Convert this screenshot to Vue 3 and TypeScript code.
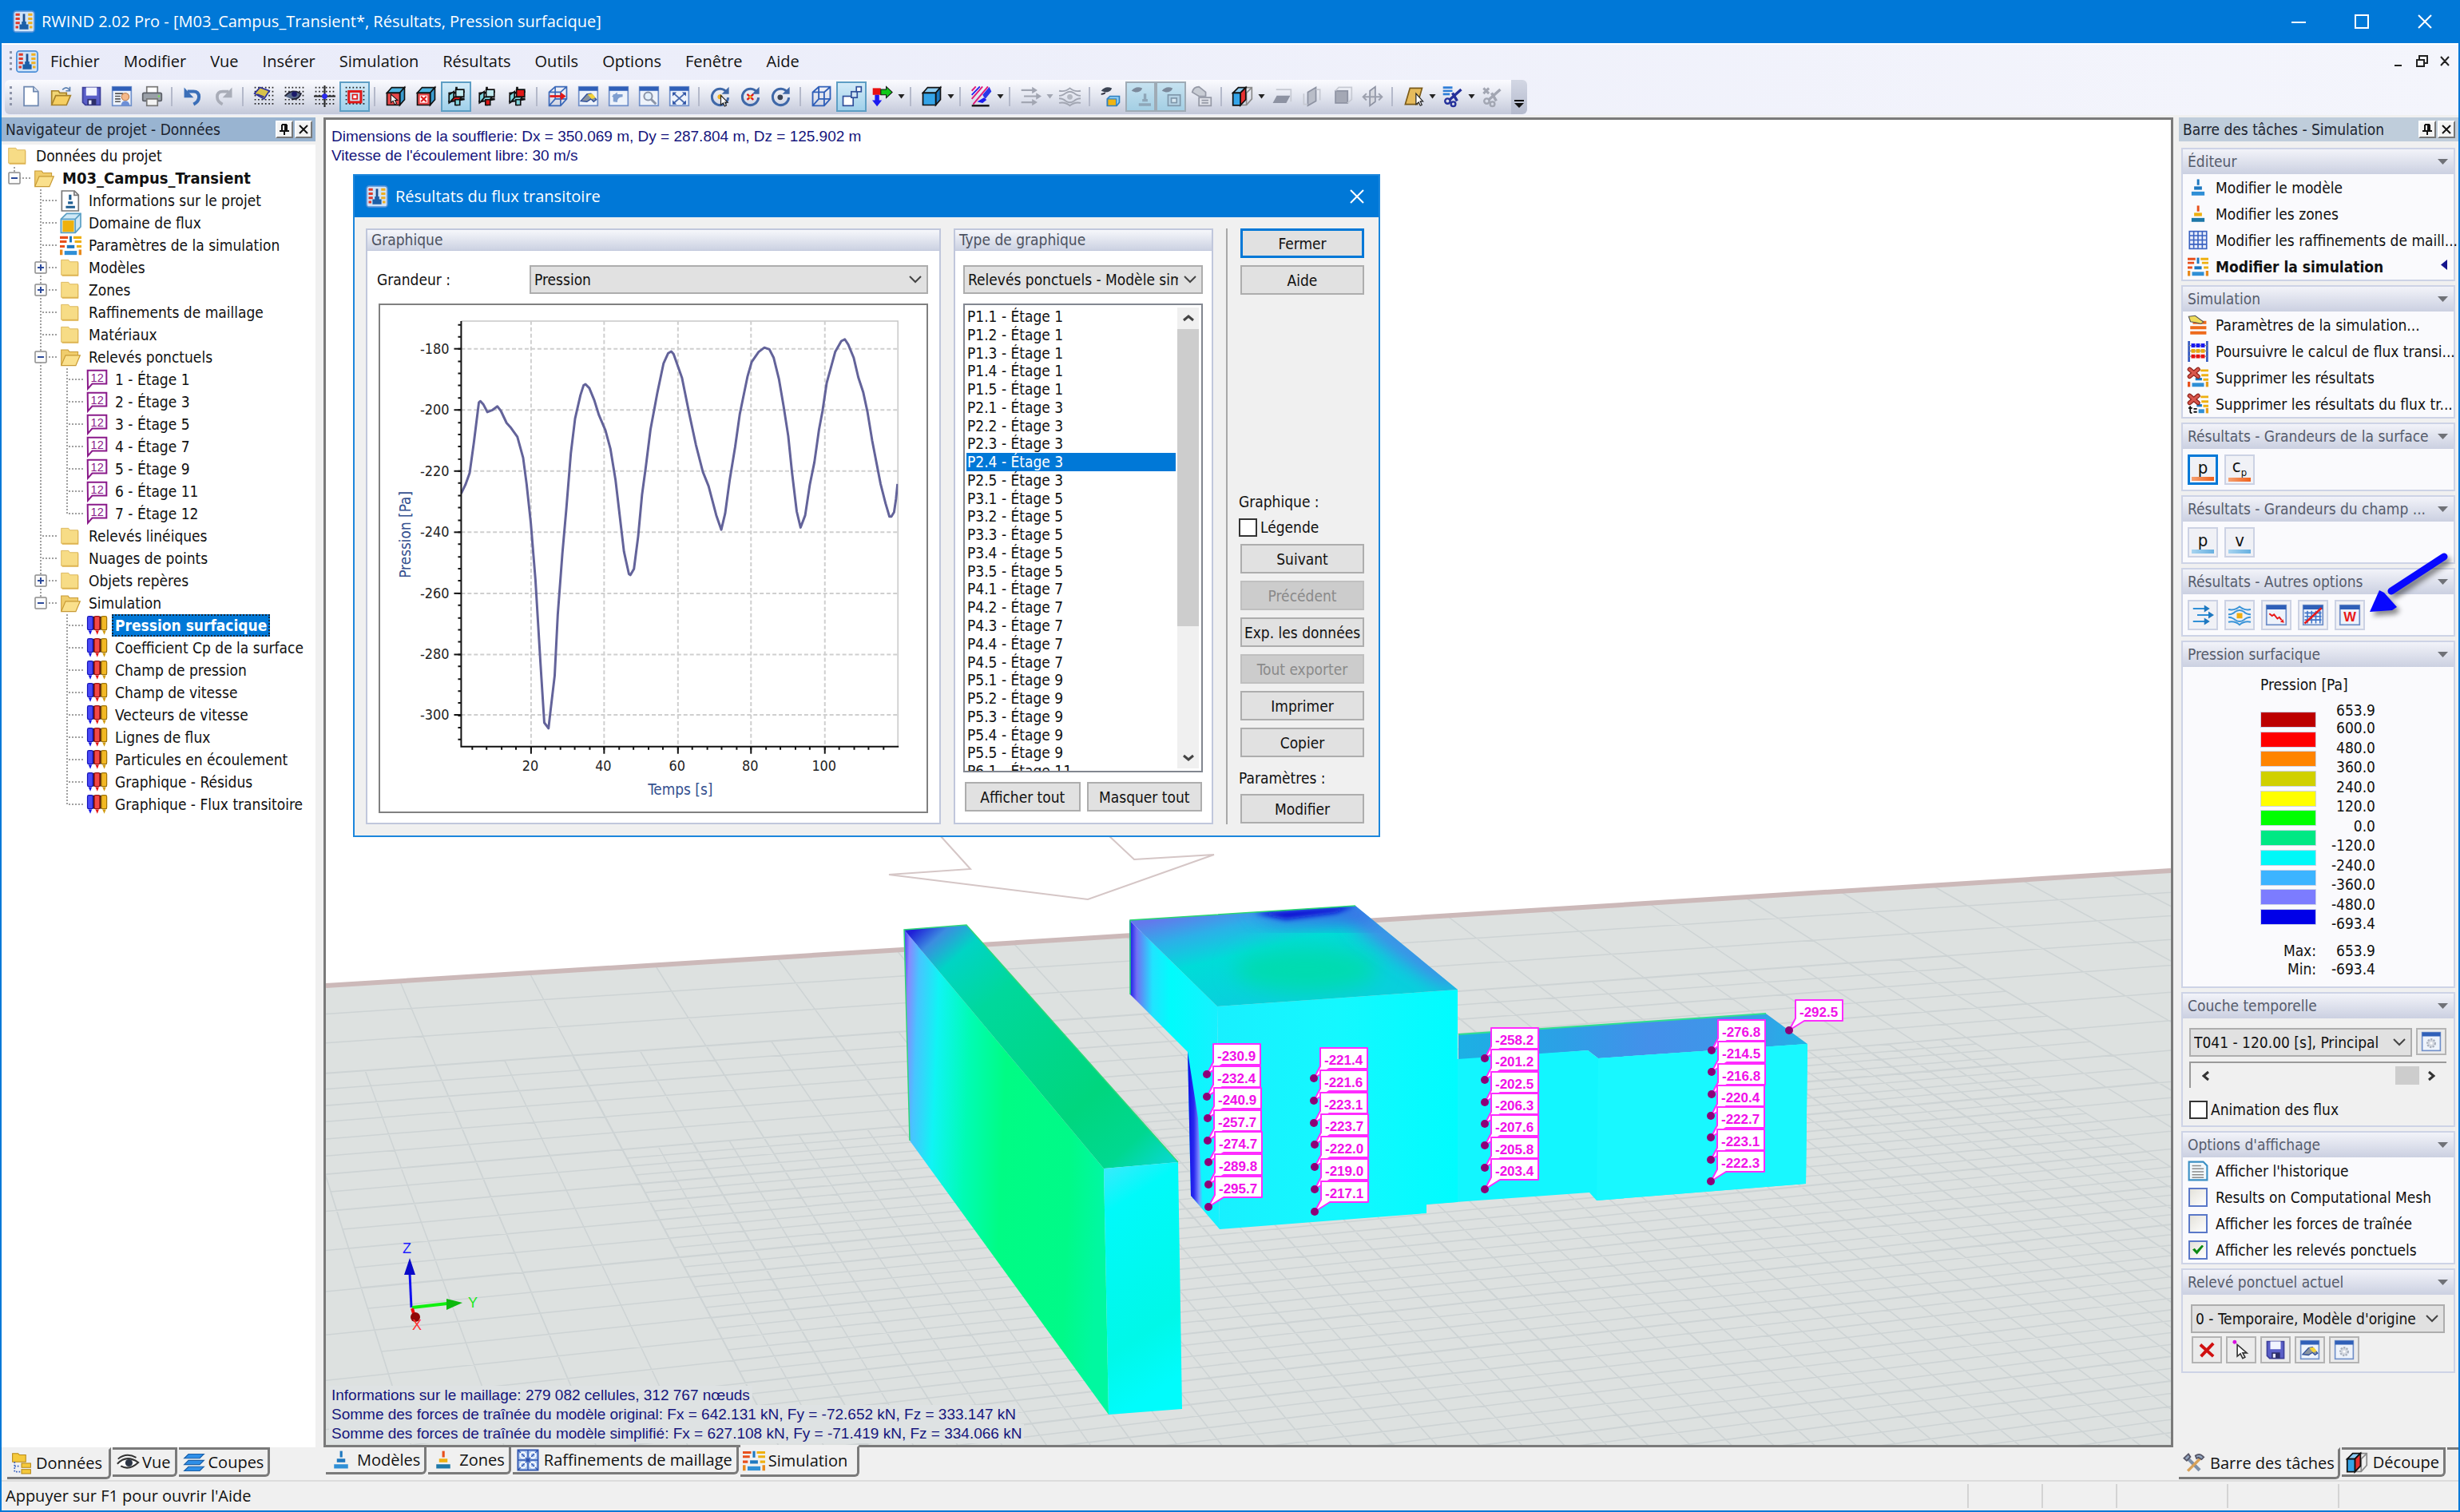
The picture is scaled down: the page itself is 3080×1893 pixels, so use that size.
<script setup lang="ts">
import { ref } from 'vue'

/* ---------- icon library: inner markup on a 16 x 16 grid ---------- */
const windowFrame =
  '<rect x="1" y="1" width="14" height="14" fill="#eef3fb" stroke="#6f8fc9"/><rect x="1" y="1" width="14" height="3" fill="#2f5fb8"/>'
const rotate =
  '<path d="M13 5.2A6 6 0 1 0 14 9" fill="none" stroke="#3f68a8" stroke-width="1.8"/><path d="M14.6 1v5.4H9.2z" fill="#3f68a8"/>'
const scissors = (c: string) =>
  `<path d="M14.5 3 5.5 11M8 5.500l3.500 6" stroke="${c}" stroke-width="2"/><circle cx="4.4" cy="11.6" r="1.9" fill="none" stroke="${c}" stroke-width="1.4"/><circle cx="8.6" cy="13.8" r="1.7" fill="none" stroke="${c}" stroke-width="1.4"/>`
const cube = (front: string, top: string, side: string, line: string) =>
  `<path d="M1.5 5.5 5 1.5h9.5L11 5.5z" fill="${top}" stroke="${line}"/><path d="M11 5.5l3.500-4v9L11 14.5z" fill="${side}" stroke="${line}"/><path d="M1.5 5.5H11v9H1.5z" fill="${front}" stroke="${line}"/>`
const dots =
  '<path d="M1 1.5h14M1 4.5h14M1 7.5h14M1 10.5h14M1 13.5h14" stroke="#222" stroke-width="1" stroke-dasharray="1 1.6"/>'
const tower = (a: string, b: string, c: string) =>
  `<rect x="7.2" y="1.5" width="1.8" height="4.5" fill="${a}"/><rect x="5" y="7" width="6" height="2.6" fill="${b}"/><rect x="3" y="11" width="10" height="3" fill="${c}"/>`
const bricks =
  '<path d="M0 2h6M0 5h5M0 8.6h3.6" stroke="#e8501c" stroke-width="1.8"/><path d="M0 11v4h2v-4zM14 11v4h2v-4z" fill="#e88a1c"/><path d="M10 2h6M11 5h5M12.4 8.6H16" stroke="#eeb010" stroke-width="1.8"/><path d="M8 1v4.6" stroke="#1e78c0" stroke-width="1.8"/><path d="M5.2 8.8h5.6" stroke="#1e78c0" stroke-width="2.4"/><path d="M3.4 13.4h9.2" stroke="#2f8fd6" stroke-width="3"/>'
const redCross =
  '<path d="M1.5 1.5 8 7M8 1.5 1.5 7" stroke="#8c2018" stroke-width="3.4" stroke-linecap="round"/><path d="M1.5 1.5 8 7M8 1.5 1.5 7" stroke="#d8564c" stroke-width="2" stroke-linecap="round"/>'
const section = (a: string, b: string, c: string) =>
  `<path d="M8 1v14M2 6l12-1.500M2 12l12-2" stroke="#111" stroke-width="1.6"/><path d="M2.5 7 6 4.500v6L2.500 13z" fill="#7fd4dc" stroke="#111"/><path d="M7.500 3h6v5.500h-6z" fill="${c}" stroke="#111"/><path d="M4 11.500 6.500 8.500H12L9.500 11.500z" fill="${a}" stroke="#111"/><path d="M7 10.500h3.500V14.500H7z" fill="${b}" stroke="#111"/>`

const icons: Record<string, string> = {
  app: '<rect x="0.5" y="0.5" width="15" height="15" rx="2" fill="#cfe3f8" stroke="#4c8fd8"/><path d="M2 3h3M2 6h3M2 9h3M2 12h2" stroke="#e03a2a" stroke-width="1.6"/><path d="M11 3h3M11 6h3M11 9h3M12 12h2" stroke="#f0b020" stroke-width="1.6"/><path d="M8 2.5V9" stroke="#1c4f8f" stroke-width="1.6"/><path d="M6.4 8h3.2v2h1.6v3.5H4.8V10h1.6z" fill="#1c5fa8"/>',
  page: '<path d="M3 1h7l3.5 3.5V15H3z" fill="#fff" stroke="#6d87b0"/><path d="M10 1v3.5h3.5" fill="#dfe8f5" stroke="#6d87b0"/>',
  open: '<path d="M1 14V4h5l1 1.5h5V8" fill="#f2d675" stroke="#a8822a"/><path d="M1 14.5 4 7.5h11l-3 7z" fill="#f6cf62" stroke="#a8822a"/><path d="M9 3.2q3-3 5 0M14.5 1v3h-3" fill="none" stroke="#5a7fb0"/>',
  save: '<path d="M1.5 1.5h13v13h-11l-2-2z" fill="#5a5fc8" stroke="#3c3f9a"/><rect x="4" y="1.5" width="8" height="6" fill="#f2f4ff"/><rect x="5" y="10" width="6.5" height="4.5" fill="#2d2f6a"/><rect x="6" y="11" width="2" height="3" fill="#e8eaff"/>',
  report: windowFrame + '<path d="M3 6h6M3 8h4M3 10h4M3 12h4" stroke="#555"/><circle cx="10.6" cy="8.4" r="2.8" fill="#f5b98a" stroke="#b87844" stroke-width=".6"/><path d="M7.4 15q.4-3.6 3.2-3.6t3.4 3.6z" fill="#6d8fd6"/>',
  print: '<rect x="4" y="1" width="8" height="5" fill="#fff" stroke="#777"/><rect x="1" y="5.5" width="14" height="6" rx="1" fill="#9aa0a8" stroke="#5c6068"/><rect x="4" y="10" width="8" height="5" fill="#f3f3f3" stroke="#777"/><circle cx="13" cy="8" r=".8" fill="#7be05a"/>',
  undo: '<path d="M4 4.5h4.5q4 0 4 4 0 3.500-4 5.500" fill="none" stroke="#3b6fb8" stroke-width="2.4"/><path d="M1.5 1.500v7.500h7z" fill="#3b6fb8"/>',
  redo: '<path d="M12 4.5H7.500q-4 0-4 4 0 3.500 4 5.500" fill="none" stroke="#a9adb8" stroke-width="2.2"/><path d="M14.5 1.500v7.500h-7z" fill="#a9adb8"/>',
  gridPlane: dots + '<path d="M1 6 5 1.5l7 2.5-4 6z" fill="#d8c24a" stroke="#2b2f9a"/><path d="M3 6.5l5 2" stroke="#2b2f9a"/>',
  gridEye: dots + '<path d="M1 8q5-6 12-2-2 5-7 4" fill="#5a6a8a" stroke="#223"/><circle cx="8" cy="6.4" r="2" fill="#1a1a6a"/>',
  gridCross: dots + '<path d="M8 0v16M0 8h16" stroke="#222" stroke-width="1.2"/><circle cx="8" cy="8" r="2" fill="#2a2af0"/>',
  gridSquare: dots + '<rect x="3.4" y="4.4" width="9" height="8" fill="#cfe6f5" stroke="#e01818" stroke-width="1.8"/><rect x="6.2" y="6.8" width="3.4" height="3.2" fill="#fff" stroke="#e01818"/>',
  cubeSelect: cube('#e8484a', '#4cb4e0', '#3a9cd0', '#111') + '<path d="M4.4 6.6v6.2l1.6-1.4 1.2 2.6 1.4-.6-1.2-2.4h2z" fill="#eee" stroke="#111" stroke-width=".6"/>',
  cubeCross: cube('#e8484a', '#4cb4e0', '#3a9cd0', '#111') + '<rect x="3.4" y="7.4" width="5.6" height="5.4" fill="#fff"/><path d="M4.2 8.2l4 3.8M8.2 8.2l-4 3.8" stroke="#e01818" stroke-width="1.2"/>',
  secA: section('#e01818', '#7fd4dc', '#bfe8ee'),
  secB: section('#7fd4dc', '#e01818', '#bfe8ee'),
  secC: section('#7fd4dc', '#7fd4dc', '#e01818'),
  wireArrow: '<path d="M1.5 5 6 1h8.5v9L10 15H1.5zM1.5 5H10v10M10 5l4.5-4M6 1v9H14.5M6 10 1.5 15" fill="none" stroke="#3a68b8"/><path d="M2 8h9" stroke="#e01818" stroke-width="1.6"/><path d="M14 8l-4-3v6z" fill="#e01818"/>',
  winEdit: windowFrame + '<path d="M2.500 11.500 7 6.500l3-.5 4 4.500-2 1.500-2-2-3 2z" fill="#8a94a0" stroke="#2f4f9a" stroke-width=".8"/><path d="M7.500 6.500l3.500-.5 2.500 3-3 1z" fill="#f2d23a"/>',
  winUndo: windowFrame + '<path d="M4 12V6.5h7v2q-4 0-4 4z" fill="#7f9fd0"/><path d="M3 8l4-3v6z" fill="#7f9fd0"/>',
  winZoom: windowFrame + '<circle cx="7.4" cy="8" r="3" fill="#e3f0fc" stroke="#8a94a8" stroke-width="1.2"/><path d="M9.6 10.2l3.6 3.6" stroke="#8a94a8" stroke-width="1.8"/>',
  winFit: windowFrame + '<path d="M4 6l8 7M12 6l-8 7" stroke="#4a6cb0" stroke-width="1.1"/><path d="M3 5h3L3 8zM13 5h-3l3 3zM3 14h3l-3-3zM13 14h-3l3-3z" fill="#2f55a8"/>',
  rotA: rotate + '<circle cx="8" cy="8.4" r="1.8" fill="#f0b020"/><path d="M8.6 7.4v7l1.8-1.4 1 2.4 1.3-.6-1-2.3h2z" fill="#fff" stroke="#222" stroke-width=".7"/>',
  rotB: rotate + '<path d="M5.6 6.4l4.6 4.2M10.2 6.4 5.6 10.6" stroke="#e01818" stroke-width="1.4"/><circle cx="7.9" cy="8.5" r="1.1" fill="#f0b020"/>',
  rotC: rotate + '<circle cx="7.6" cy="8.8" r="2" fill="#3c4454"/>',
  wire: '<path d="M1.5 5 6 1h8.5v9L10 15H1.5zM1.5 5H10v10M10 5l4.5-4M6 1v9H14.5M6 10 1.5 15" fill="none" stroke="#2f5fb8" stroke-width="1.1"/>',
  boxes: '<rect x="1.5" y="8" width="7.5" height="7" fill="#fff" stroke="#2f4f9a"/><rect x="7.6" y="4.6" width="4.4" height="4.4" fill="#cfe4f4" stroke="#2f4f9a"/><rect x="11.4" y="1" width="3.6" height="3.6" fill="#fff" stroke="#2f4f9a"/>',
  axes: '<path d="M1 2h6v5H1z" fill="#e81010"/><path d="M7 3h4V.8L15.5 5 11 9.2V7H7z" fill="#10c818" stroke="#111" stroke-width=".6"/><path d="M2.6 7h3.2v4h2L4.2 15.500.6 11h2z" fill="#1a1af0"/>',
  solid: cube('#35a4e8', '#8ccdf4', '#1c78c0', '#111'),
  hatch: '<path d="M1 4 4 .8M1 10 9 .8M2 14 13 .8" stroke="#e01878" stroke-width="1.1"/><path d="M1 7 7 .8" stroke="#1a1af0"/><path d="M9 7l5-6 1.6 3.4L11 10z" fill="#2a36e8"/><path d="M5 12l5-3 2 1.6-3 2.4z" fill="#1a1af0"/><path d="M1 15h13" stroke="#111" stroke-width="1.4"/>',
  arrowsGray: '<path d="M1 3.5h9M3 8h10M1 12.5h9" stroke="#a2a6b2" stroke-width="1.3"/><path d="M9 1l4 2.5L9 6zM12 5.5 16 8l-4 2.5zM9 10l4 2.5L9 15z" fill="#a2a6b2"/>',
  wavesGray: '<path d="M0 4q4.500 1 8-2 3.500 3 8 2M0 7.600q3 0 5-2 3-2 6 0 2 2 5 2M0 9.600q3 0 5 2 3 2 6 0 2-2 5-2M0 13q4.500-1 8 2 3.500-3 8-2" fill="none" stroke="#a2a6b2" stroke-width="1.1"/><circle cx="8" cy="8.500" r="2" fill="#b4b8c2"/>',
  eyeBox: '<path d="M1 4q3-4 8-2-1 3-5 3z" fill="#3c4454"/><path d="M1 6.4q2 0 3-1" stroke="#223" fill="none"/><path d="M5.5 10 7.5 8h7v4.6l-2 2.4h-7z" fill="#8ccdf4" stroke="#2f7fc0"/><rect x="5.8" y="10" width="6.4" height="5" fill="#f0b412" stroke="#2f7fc0" stroke-width=".7"/>',
  eyeTower: '<path d="M1 4q3-4 8-2-1 3-5 3z" fill="#7c8a9c"/><path d="M11 6v4M9 11h4M6.4 14.2h9" stroke="#8fa6b8" stroke-width="2"/>',
  eyeFrame: '<path d="M1 4q3-4 8-2-1 3-5 3z" fill="#7c8a9c"/><rect x="5.6" y="7" width="9" height="8" fill="#b6d2e4" stroke="#7f97aa"/><rect x="8" y="9.4" width="4" height="3.4" fill="#d6e6f0" stroke="#7f97aa"/>',
  handBox: '<path d="M1 5q1-4 5-4l5 4v3H6z" fill="#c8ccd4" stroke="#9599a6"/><path d="M6 9h9v6H6z" fill="#dfe1e8" stroke="#9599a6"/><path d="M8 11h5M8 13h5" stroke="#9599a6"/>',
  cutCube: '<path d="M10 1.500h5v8.500l-4 4.500H7" fill="none" stroke="#8a8a8a"/><path d="M11 5.500 15 1.500M11 5.500v9M8 5.500h3" fill="none" stroke="#8a8a8a"/><path d="M1 5.500 5 1.500h5.500L6.500 5.500z" fill="#8ccdf4" stroke="#111"/><path d="M6.500 5.500l4-4v9l-4 4.200z" fill="#e83030" stroke="#111"/><path d="M1 5.500h5.500v9.200H1z" fill="#35a4e8" stroke="#111"/>',
  planeA: '<path d="M1.5 13 4.5 7.5h10l-3 5.5z" fill="#8d92a2"/><path d="M4 3h11v9" fill="none" stroke="#c6c9d2"/>',
  planeB: '<path d="M5 5 11 1.5v10L5 15z" fill="#b9bdc8" stroke="#8d92a2"/><path d="M2 6v8h3M11 3h3v8" fill="none" stroke="#c6c9d2"/>',
  planeC: '<rect x="3" y="4" width="9" height="9" fill="#a4a8b5" stroke="#8d92a2"/><path d="M3 4l2.4-2.6H15v9L12 13" fill="none" stroke="#c6c9d2"/>',
  planeD: '<path d="M6 4l4-3v11l-4 3z" fill="#d6d8df" stroke="#8d92a2"/><path d="M1 8.5h14M3.5 6 1 8.5 3.5 11M12.5 6 15 8.5 12.5 11" fill="none" stroke="#9ca0ad" stroke-width="1.2"/>',
  book: '<path d="M2 14 5.5 2h9L11 14z" fill="#e6bb5c" stroke="#7a5a18"/><path d="M10 6v8l2-1.6 1.2 2.6 1.2-.6-1.2-2.6h2z" fill="#fff" stroke="#222" stroke-width=".7"/>',
  cut: '<path d="M1 1.5h7M1 4h7M1 6.500h5" stroke="#2f7fd8" stroke-width="1.6"/>' + scissors('#24309a'),
  cutGray: '<path d="M2 2l4 4M6 2 2 6" stroke="#a2a6b2" stroke-width="1.8"/>' + scissors('#a2a6b2'),

  folder: '<path d="M1.6 2.6h5l1 1.4h6.2v10H1.6z" fill="#e0b248"/><path d="M1 2h5.4l1 1.4H13.4V13.2H1z" fill="#f7dc86" stroke="#d8b050" stroke-width=".5"/>',
  folderOpen: '<path d="M1 13.6V2.4h5l1 1.4h6.4V7" fill="#f0cd6c" stroke="#c89a34" stroke-width=".6"/><path d="M1 14 4.2 6.4H15L11.8 14z" fill="#fae08c" stroke="#c89a34" stroke-width=".7"/>',
  info: '<path d="M1.4.6h9.4l3 3v11.8H1.4z" fill="#fff" stroke="#777"/><path d="M10.6.8v3h3" fill="none" stroke="#777"/><path d="M7.6 3.4v3.8M6 9.4h3.6M4.4 12.6h6.8" stroke="#1f5f92" stroke-width="1.9"/>',
  domain: '<path d="M.8 5 5 .8h10.4v9.8L11.4 15H.8z" fill="#cfe8f6" stroke="#5a9fc4"/><path d="M11.4 5v10M.8 5h10.6l4-4.2" fill="none" stroke="#5a9fc4"/><rect x="2" y="6" width="8.4" height="8.4" fill="#efb10c"/>',
  params: bricks,
  probe: '<path d="M1 1h14v10H4.4L1.2 14.6z" fill="#fff" stroke="#8a1a8a" stroke-width="1.2"/><text x="8.1" y="9.2" font-size="8.6" text-anchor="middle" fill="#8a1a8a" font-family="Liberation Sans, sans-serif">12</text>',
  pens: '<path d="M4.6 1h1.8v10H4.6zM9.6 1h1.6v10H9.6zM13.8 2h1.6v9h-1.6z" fill="#2a1a10"/><rect x=".9" y="1" width="4" height="10" rx="1" fill="#4a4af8" stroke="#1414b8" stroke-width=".7"/><rect x="6" y="1" width="4" height="10" rx="1" fill="#f24848" stroke="#a01010" stroke-width=".7"/><rect x="11.2" y="1" width="4" height="10" rx="1" fill="#f2b824" stroke="#a07408" stroke-width=".7"/><path d="M1.6 11.6h2.6L3 14.6z" fill="#1414e8"/><path d="M6.8 11.6h2.6l-1.2 3z" fill="#e81414"/><path d="M12 11.6h2.6l-1.2 3z" fill="#d09a10"/>',
  towerBlue: tower('#1e78c0', '#1e78c0', '#2f8fd6'),
  towerMix: tower('#e8501c', '#eeb010', '#1e78a8'),
  mesh: '<rect x="1.4" y="1" width="13.2" height="13.4" fill="#e8eefc" stroke="#3a62c0"/><path d="M4.7 1v13M8 1v13M11.3 1v13M1.4 4.3h13M1.4 7.7h13M1.4 11h13" stroke="#3a62c0"/>',
  meshCells: '<rect x=".8" y=".8" width="14.4" height="14.4" fill="#a8c4ee" stroke="#2f55b0"/><path d="M8 1v14M1 8h14M1 1l14 14M15 1 1 15" stroke="#2f55b0" stroke-width=".8"/><circle cx="4.5" cy="4.5" r="2" fill="none" stroke="#fff"/><circle cx="11.5" cy="11.5" r="2" fill="none" stroke="#fff"/><circle cx="11.5" cy="4.5" r="2" fill="none" stroke="#fff"/><circle cx="4.5" cy="11.5" r="2" fill="none" stroke="#fff"/>',
  handLayers: '<path d="M4 6h10.4M2 10h12.4M2 14h12.4" stroke="#ee6a1c" stroke-width="2.4"/><path d="M.8 1.4l5-.6 6.4 4.8-2 1.4-4-1-4-.6z" fill="#f0dc5a" stroke="#555" stroke-width=".7"/>',
  abacus: '<path d="M1 0v16M15 0v16" stroke="#2f55c0" stroke-width="1.6"/><path d="M1 3.4h14M1 7.6h14M1 11.8h14" stroke="#888" stroke-width=".8"/><path d="M2.8 3.4h10.4" stroke="#1a1af0" stroke-width="3" stroke-dasharray="3 .7"/><path d="M2.8 7.6h10.4" stroke="#e8a810" stroke-width="3" stroke-dasharray="3 .7"/><path d="M2.8 11.8h10.4" stroke="#e81010" stroke-width="3" stroke-dasharray="3 .7"/>',
  dropResults: '<path d="M10 2.4h6M10.6 6h5.4M12 9.4h4" stroke="#eeb010" stroke-width="1.8"/><path d="M6 9h5" stroke="#1e78c0" stroke-width="2"/><path d="M3.4 13.4h9.2" stroke="#2f8fd6" stroke-width="3"/><path d="M0 11v4h2v-4z" fill="#e8501c"/><path d="M14 11v4h2v-4z" fill="#e8a01c"/>' + redCross,
  dropTransient: '<path d="M10 2.4h6M10.6 6h5.4M12 9.4h4" stroke="#eeb010" stroke-width="1.8"/><path d="M7 9h4" stroke="#1e78c0" stroke-width="2"/><path d="M8.4 13.4h4.4" stroke="#2f8fd6" stroke-width="3"/><path d="M14 11v4h2v-4z" fill="#e8a01c"/><path d="M2 9.4v4.4q0 1 1.4 1M.6 11h3M4.6 11.6h2.6M4.6 14h2.6" fill="none" stroke="#111" stroke-width="1.1"/>' + redCross,
  flowArrows: '<path d="M1 3.4h9M4 8h9M1 12.6h9" stroke="#2f8fd6" stroke-width="1.2"/><path d="M9 .8l4 2.6L9 6zM12 5.4 16 8l-4 2.6zM9 10l4 2.6L9 15.2z" fill="#1e78c0"/>',
  streamlines: '<path d="M0 4q4.5 1 8-2 3.5 3 8 2M0 7.6q3 0 5-2 3-2 6 0 2 2 5 2M0 9.6q3 0 5 2 3 2 6 0 2-2 5-2M0 13q4.5-1 8 2 3.5-3 8-2" fill="none" stroke="#3a94d8" stroke-width="1.1"/><rect x="6" y="6.6" width="4" height="3.8" fill="#f0ae10"/>',
  curve: windowFrame + '<path d="M3 7l2 1.6 1.4-1 2.4 3 1.4-1 1.6 2" fill="none" stroke="#e81818" stroke-width="1.1"/><path d="M13.6 13.6 10.8 13l2-2z" fill="#e81818"/>',
  meshCurve: windowFrame + '<path d="M4 5v9M7 5v9M10 5v9M13 5v9M2 6.5h12M2 9h12M2 11.5h12" stroke="#3f74c8" stroke-width=".9"/><path d="M2 14 14 3" stroke="#e81818" stroke-width="1.4"/>',
  wChart: windowFrame + '<text x="8" y="12.8" font-size="9.5" text-anchor="middle" fill="#e81818" font-weight="bold" font-family="Liberation Sans, sans-serif">W</text>',
  gear: windowFrame + '<circle cx="8" cy="9.3" r="3" fill="#d6dae2" stroke="#a9b0bd" stroke-width="1.4" stroke-dasharray="1.4 .8"/><circle cx="8" cy="9.3" r="1" fill="#fff"/>',
  history: '<path d="M1 1h11l3 3v11H1z" fill="#f2f8fc" stroke="#3a8fc4" stroke-width="1.3"/><path d="M3.4 4h7M3.4 6.3h9M3.4 8.6h9M3.4 10.9h9M3.4 13.1h9" stroke="#8a8a8a" stroke-width=".9"/>',
  remove: '<path d="M3 4l10 9M13 3 3.5 13" stroke="#d01010" stroke-width="2.4"/>',
  pick: '<circle cx="3" cy="2" r="1.5" fill="#d810e0"/><path d="M5 4v9l2.4-2 1.8 3.6 1.8-.9-1.8-3.3h3.2z" fill="#fff" stroke="#333"/>',
  tools: '<path d="M2.5 3.5l9.5 9.5" stroke="#7d8fa8" stroke-width="2.4"/><path d="M13 4 3.5 13.5" stroke="#d8a25a" stroke-width="2"/><path d="M.8 4.4 4 1.4l1.4 2-2.6 2.8z" fill="#93a6bf" stroke="#556"/><path d="M9 2.6q3-2.4 6 1l-1.6 1.6-2.2-1.4-1.4.8z" fill="#93a6bf" stroke="#556"/>',
  dataTree: '<path d="M1.5 1h4l1 1H11v5H1.5z" fill="#f5c93c" stroke="#b88a18" stroke-width=".6"/><path d="M3 7v7h4M3 10h4" fill="none" stroke="#3a62c0" stroke-dasharray="1 1"/><rect x="8" y="8" width="6.5" height="3" fill="#f5c93c" stroke="#b88a18" stroke-width=".6"/><rect x="8" y="12.4" width="6.5" height="3" fill="#f5c93c" stroke="#b88a18" stroke-width=".6"/>',
  eye: '<path d="M.5 9Q7 2 15.5 8 9 14 3 10.5" fill="#fff" stroke="#333" stroke-width="1.2"/><circle cx="8.8" cy="8.3" r="2.6" fill="#2b3444"/><path d="M1 5.5Q7 .5 14 4.5" fill="none" stroke="#333"/>',
  layers: '<path d="M4 2h11l-3 3H1zM4 6.5h11l-3 3H1zM4 11h11l-3 3H1z" fill="#2f8fe8" stroke="#1a5fa8" stroke-width=".7"/>'
}

/* ---------- menus and toolbar ---------- */
const menus = ['Fichier', 'Modifier', 'Vue', 'Insérer', 'Simulation', 'Résultats', 'Outils', 'Options', 'Fenêtre', 'Aide']

interface Tool { icon: string; on?: boolean; off?: boolean; drop?: boolean }
const toolGroups: Tool[][] = [
  [{ icon: 'page' }, { icon: 'open' }, { icon: 'save' }, { icon: 'report' }, { icon: 'print' }],
  [{ icon: 'undo' }, { icon: 'redo' }],
  [{ icon: 'gridPlane' }, { icon: 'gridEye' }, { icon: 'gridCross' }, { icon: 'gridSquare', on: true }],
  [{ icon: 'cubeSelect' }, { icon: 'cubeCross' }, { icon: 'secA', on: true }, { icon: 'secB' }, { icon: 'secC' }],
  [{ icon: 'wireArrow' }, { icon: 'winEdit' }, { icon: 'winUndo' }, { icon: 'winZoom' }, { icon: 'winFit' }],
  [{ icon: 'rotA' }, { icon: 'rotB' }, { icon: 'rotC' }],
  [{ icon: 'wire' }, { icon: 'boxes', on: true }, { icon: 'axes', drop: true }],
  [{ icon: 'solid', drop: true }],
  [{ icon: 'hatch', drop: true }],
  [{ icon: 'arrowsGray', drop: true, off: true }, { icon: 'wavesGray', off: true }],
  [{ icon: 'eyeBox' }, { icon: 'eyeTower', on: true, off: true }, { icon: 'eyeFrame', on: true, off: true }, { icon: 'handBox', off: true }],
  [{ icon: 'cutCube', drop: true }, { icon: 'planeA', off: true }, { icon: 'planeB', off: true }, { icon: 'planeC', off: true }, { icon: 'planeD', off: true }],
  [{ icon: 'book', drop: true }, { icon: 'cut', drop: true }, { icon: 'cutGray', off: true }]
]

/* ---------- project tree ---------- */
type Guide = 'none' | 'line' | 'tee' | 'end' | 'plus' | 'minus' | 'minusEnd' | 'minusTop'
interface Node { guides: Guide[]; icon: string; text: string; bold?: boolean; selected?: boolean; root?: boolean }
const two = (g: Guide, icon: string, text: string): Node => ({ guides: ['none', g], icon, text })
const floors = ['1 - Étage 1', '2 - Étage 3', '3 - Étage 5', '4 - Étage 7', '5 - Étage 9', '6 - Étage 11', '7 - Étage 12']
const results = ['Pression surfacique', 'Coefficient Cp de la surface', 'Champ de pression', 'Champ de vitesse', 'Vecteurs de vitesse', 'Lignes de flux', 'Particules en écoulement', 'Graphique - Résidus', 'Graphique - Flux transitoire']
const tree: Node[] = [
  { guides: [], icon: 'folder', text: 'Données du projet' },
  { guides: ['minusTop'], icon: 'folderOpen', text: 'M03_Campus_Transient', bold: true, root: true },
  two('tee', 'info', 'Informations sur le projet'),
  two('tee', 'domain', 'Domaine de flux'),
  two('tee', 'params', 'Paramètres de la simulation'),
  two('plus', 'folder', 'Modèles'),
  two('plus', 'folder', 'Zones'),
  two('tee', 'folder', 'Raffinements de maillage'),
  two('tee', 'folder', 'Matériaux'),
  two('minus', 'folderOpen', 'Relevés ponctuels'),
  ...floors.map((text, i): Node => ({ guides: ['none', 'line', i === floors.length - 1 ? 'end' : 'tee'], icon: 'probe', text })),
  two('tee', 'folder', 'Relevés linéiques'),
  two('tee', 'folder', 'Nuages de points'),
  two('plus', 'folder', 'Objets repères'),
  two('minusEnd', 'folderOpen', 'Simulation'),
  ...results.map((text, i): Node => ({ guides: ['none', 'none', i === results.length - 1 ? 'end' : 'tee'], icon: 'pens', text, bold: i === 0, selected: i === 0 }))
]
const boxed = (g: Guide) => g.startsWith('plus') || g.startsWith('minus')

/* ---------- floor grid, projected ---------- */
const origin = [1811, 1146], farRight = [12000, 504], farLeft = [-176, -372]
const project = (u: number, v: number) => {
  const a = 0.01266 * u, b = -0.01826 * v, w = 1 + a + b
  return [0, 1].map(i => Math.round((origin[i] + a * farRight[i] + b * farLeft[i]) / w)).join(' ')
}
const gridPath = (u0: number, u1: number, v0: number, v1: number, step: number) => {
  let d = ''
  for (let u = u0; u <= u1; u += step) d += `M${project(u, v0)}L${project(u, v1)}`
  for (let v = v0; v <= v1; v += step) d += `M${project(u0, v)}L${project(u1, v)}`
  return d
}
const floorGrid = gridPath(-14, 9, 0, 20, 1) + gridPath(-10, 4, 3, 20, 0.5) + gridPath(-8, 3, 6, 20, 0.25)

/* ---------- probe labels ---------- */
interface Probe { x: number; y: number; value: string }
const column = (x: number, y: number, lean: number, step: number, values: string[]): Probe[] =>
  values.map((value, i) => ({ x: Math.round(x + lean * i), y: Math.round(y + step * i), value }))
const probes: Probe[] = [
  ...column(1511, 1345, 0.4, 27.6, ['-230.9', '-232.4', '-240.9', '-257.7', '-274.7', '-289.8', '-295.7']),
  ...column(1645, 1350, 0.2, 27.8, ['-221.4', '-221.6', '-223.1', '-223.7', '-222.0', '-219.0', '-217.1']),
  ...column(1859, 1325, 0, 27.3, ['-258.2', '-201.2', '-202.5', '-206.3', '-207.6', '-205.8', '-203.4']),
  ...column(2143, 1315, -0.2, 27.3, ['-276.8', '-214.5', '-216.8', '-220.4', '-222.7', '-223.1', '-222.3']),
  { x: 2240, y: 1290, value: '-292.5' }
]

/* ---------- chart ---------- */
const yTicks = [-180, -200, -220, -240, -260, -280, -300].map((value, i) => ({ value, y: Math.round(435 + i * 76.9) }))
const xTicks = [20, 40, 60, 80, 100].map((value, i) => ({ value, x: Math.round(663.6 + i * 92.5) }))
let minor = ''
for (let y = 435.3 - 30.8; y < 936; y += 15.38) minor += `M572 ${Math.round(y)}h4`
for (let x = 589.6; x < 1126; x += 18.5) minor += `M${Math.round(x)} 936v4`
const curve = '302,762 313,742 324,715 335,645 348,553 352,550 360,558 370,575 382,571 396,562 405,572 420,600 432,612 448,632 463,680 472,740 483,830 495,960 508,1150 518,1288 529,1301 534,1262 545,1180 553,1040 565,900 575,800 587,670 598,590 612,536 620,514 625,511 635,520 648,548 660,582 677,617 690,660 703,730 715,820 725,895 738,947 742,949 751,935 762,860 772,765 782,700 794,615 812,530 828,463 840,440 848,436 854,442 876,497 895,580 912,650 930,712 945,745 965,812 978,845 988,808 1000,730 1014,655 1026,580 1046,494 1057,460 1075,437 1090,427 1103,431 1114,450 1128,500 1140,562 1152,630 1162,715 1174,803 1184,840 1196,812 1208,742 1220,690 1232,615 1241,573 1252,508 1274,437 1290,412 1299,408 1308,420 1322,450 1334,495 1347,530 1358,575 1370,640 1381,690 1392,740 1405,785 1415,815 1420,815 1427,805 1432,775 1436,740'

const series: string[] = []
;[1, 3, 5, 7, 9].forEach((floor, i) => {
  for (let k = 1; k <= 5; k++) series.push(`P${i + 1}.${k} - Étage ${floor}`)
})
series.push('P6.1 - Étage 11')
const selectedSeries = ref('P2.4 - Étage 3')

/* ---------- task panel ---------- */
const editor = [
  { icon: 'towerBlue', text: 'Modifier le modèle' },
  { icon: 'towerMix', text: 'Modifier les zones' },
  { icon: 'mesh', text: 'Modifier les raffinements de maill...' },
  { icon: 'params', text: 'Modifier la simulation', current: true }
]
const simulation = [
  { icon: 'handLayers', text: 'Paramètres de la simulation...' },
  { icon: 'abacus', text: 'Poursuivre le calcul de flux transi...' },
  { icon: 'dropResults', text: 'Supprimer les résultats' },
  { icon: 'dropTransient', text: 'Supprimer les résultats du flux tr...' }
]
const others = ['flowArrows', 'streamlines', 'curve', 'meshCurve', 'wChart']
const scaleColors = ['#bc0000', '#ff0000', '#ff8400', '#d0d000', '#ffff00', '#00ff00', '#00e884', '#00f8f8', '#3cb4ff', '#7c7cff', '#0000e8']
const scaleValues = ['600.0', '480.0', '360.0', '240.0', '120.0', '0.0', '-120.0', '-240.0', '-360.0', '-480.0', '-693.4']
const display = ref([
  { text: 'Results on Computational Mesh', on: false },
  { text: 'Afficher les forces de traînée', on: false },
  { text: 'Afficher les relevés ponctuels', on: true }
])
const legend = ref(false)
const animation = ref(false)
const probeTools = ['remove', 'pick', 'save', 'winEdit', 'gear']
</script>

<template>
  <div class="window">
    <header class="titlebar">
      <svg class="ic" viewBox="0 0 16 16" v-html="icons.app" />
      <h1>RWIND 2.02 Pro - [M03_Campus_Transient*, Résultats, Pression surfacique]</h1>
      <button class="win-btn" aria-label="Réduire"><svg viewBox="0 0 20 20"><path d="M1 11h18" /></svg></button>
      <button class="win-btn" aria-label="Agrandir"><svg viewBox="0 0 20 20"><path d="M2 2h16v16H2z" /></svg></button>
      <button class="win-btn" aria-label="Fermer"><svg viewBox="0 0 20 20"><path d="M2 2l16 16M18 2 2 18" /></svg></button>
    </header>

    <nav class="menubar">
      <span class="grip" />
      <svg class="ic" viewBox="0 0 16 16" v-html="icons.app" />
      <button v-for="m in menus" :key="m">{{ m }}</button>
      <span class="fill" />
      <svg class="mdi" viewBox="0 0 76 20"><path d="M2 15h9M30 8h9v8h-9zM33 8V3h10v9h-4M60 4l10 11M70 4 60 15" /></svg>
    </nav>

    <div class="toolbar-row">
      <div class="toolbar">
        <span class="grip" />
        <template v-for="(group, gi) in toolGroups" :key="gi">
          <span v-if="gi" class="sep" />
          <template v-for="t in group" :key="t.icon">
            <button class="tool" :class="{ on: t.on, off: t.off }" :aria-label="t.icon">
              <svg class="ic" viewBox="0 0 16 16" v-html="icons[t.icon]" />
            </button>
            <span v-if="t.drop" class="drop" :class="{ off: t.off }" />
          </template>
        </template>
      </div>
      <span class="overflow" />
    </div>

    <main class="workspace">
      <aside class="dock left">
        <div class="dock-head">
          <h2>Navigateur de projet - Données</h2>
          <button class="cap" aria-label="Épingler"><svg viewBox="0 0 16 16"><path d="M5 2v8M11 2v8M9 2v8M5 2h6M2 10h12M8 10v5" /></svg></button>
          <button class="cap" aria-label="Fermer le volet"><svg viewBox="0 0 16 16"><path d="M3 3l10 10M13 3 3 13" /></svg></button>
        </div>
        <ul class="tree">
          <li v-for="n in tree" :key="n.text">
            <svg v-for="(g, i) in n.guides" :key="i" class="guide" viewBox="0 0 33 28">
              <g v-if="g !== 'none'">
                <path class="dot" :d="g === 'end' || g === 'minusEnd' || g === 'minusTop' ? 'M16 0V14' : 'M16 0V28'" />
                <path v-if="g !== 'line'" class="dot" d="M18 14H38" />
                <g v-if="boxed(g)">
                  <rect x="9" y="7" width="14" height="14" rx="1" fill="#fbfbfb" stroke="#8c8c8c" stroke-width="1.5" />
                  <path :d="g === 'plus' ? 'M12 14h8M16 10v8' : 'M12 14h8'" stroke="#2c4a9a" stroke-width="2" />
                </g>
              </g>
            </svg>
            <svg class="ic" viewBox="0 0 16 16" v-html="icons[n.icon]" />
            <span class="label" :class="{ bold: n.bold, selected: n.selected, root: n.root }">{{ n.text }}</span>
          </li>
        </ul>
        <div class="tabs">
          <button class="tab active"><svg class="ic" viewBox="0 0 16 16" v-html="icons.dataTree" />Données</button>
          <button class="tab tight"><svg class="ic" viewBox="0 0 16 16" v-html="icons.eye" />Vue</button>
          <button class="tab tight"><svg class="ic" viewBox="0 0 16 16" v-html="icons.layers" />Coupes</button>
          <span class="tab-fill" />
        </div>
      </aside>

      <section class="center">
        <div class="view">
          <svg class="scene" viewBox="408 150 2310 1661" preserveAspectRatio="xMinYMin slice">
            <defs>
              <linearGradient id="wallSide" x1="0" x2="1" y1="0" y2="0.1">
                <stop offset="0" stop-color="#3c3cf0" /><stop offset=".03" stop-color="#8888ff" /><stop offset=".08" stop-color="#48c4ff" />
                <stop offset=".18" stop-color="#10f4f4" /><stop offset=".34" stop-color="#00fcb4" /><stop offset=".52" stop-color="#00fc84" /><stop offset=".85" stop-color="#00fa88" /><stop offset="1" stop-color="#00f8a0" />
              </linearGradient>
              <linearGradient id="wallTop" x1="1150" y1="1160" x2="1440" y2="1480" gradientUnits="userSpaceOnUse">
                <stop offset="0" stop-color="#2020d8" /><stop offset=".06" stop-color="#3c8ce0" /><stop offset=".14" stop-color="#00d4c4" /><stop offset=".3" stop-color="#00d89c" />
                <stop offset=".7" stop-color="#00d67e" /><stop offset=".88" stop-color="#00d890" /><stop offset="1" stop-color="#08d8d0" />
              </linearGradient>
              <linearGradient id="wallFront" x1="0" x2=".2" y1="0" y2="1">
                <stop offset="0" stop-color="#40e8fc" /><stop offset=".2" stop-color="#00fafa" /><stop offset=".75" stop-color="#00f8e8" /><stop offset="1" stop-color="#00fcfc" />
              </linearGradient>
              <linearGradient id="roof" x1="1500" y1="1138" x2="1530" y2="1258" gradientUnits="userSpaceOnUse">
                <stop offset="0" stop-color="#6478ec" /><stop offset=".25" stop-color="#2cb0e8" /><stop offset=".55" stop-color="#00dcd8" /><stop offset="1" stop-color="#08d0dc" />
              </linearGradient>
              <linearGradient id="blockSide" x1="1414" x2="1530" y1="1250" y2="1250" gradientUnits="userSpaceOnUse">
                <stop offset="0" stop-color="#1414e8" /><stop offset=".08" stop-color="#7070f4" /><stop offset=".25" stop-color="#20e4ff" /><stop offset=".45" stop-color="#00fcfc" /><stop offset="1" stop-color="#18f0ff" />
              </linearGradient>
              <linearGradient id="blockEdge" x1="1486" x2="1508" y1="1400" y2="1400" gradientUnits="userSpaceOnUse">
                <stop offset="0" stop-color="#0808e0" /><stop offset=".4" stop-color="#2a2af0" /><stop offset=".7" stop-color="#8090ff" /><stop offset="1" stop-color="#18f0ff" stop-opacity="0" />
              </linearGradient>
              <linearGradient id="blockFront" x1="0" x2="1" y1="0" y2="0">
                <stop offset="0" stop-color="#18f0ff" /><stop offset=".5" stop-color="#14f8ff" /><stop offset="1" stop-color="#00fcff" />
              </linearGradient>
              <linearGradient id="annexRoof" x1="0" x2="1" y1="0" y2="0">
                <stop offset="0" stop-color="#1cb0e4" /><stop offset=".3" stop-color="#2ca0e6" /><stop offset=".55" stop-color="#4490ea" /><stop offset=".8" stop-color="#3c98e8" /><stop offset="1" stop-color="#20b4e6" />
              </linearGradient>
              <filter id="soft" x="-50%" y="-50%" width="200%" height="200%"><feGaussianBlur stdDeviation="13" /></filter>
              <filter id="faint" x="-50%" y="-50%" width="200%" height="200%"><feGaussianBlur stdDeviation="3" /></filter>
              <clipPath id="roofClip"><path d="M1414 1152 1697 1134 1825 1239 1524 1260z" /></clipPath>
            </defs>
            <path d="M408 1235 2718 1089V1811H408z" fill="#dde1e0" />
            <path :d="floorGrid" fill="none" stroke="#cdd3d4" stroke-width="1.5" />
            <path d="M408 1200V1232L2718 1087V1050z" fill="#fff" />
            <path d="M408 1234 2718 1090" stroke="#ccb9b9" stroke-width="6" />
            <path d="M1177 1046 1215 1088 1113 1095 1362 1126 1520 1070 1420 1076 1388 1046" fill="none" stroke="#d5c6c6" stroke-width="2" />

            <path d="M1132 1164 1382 1463 1388 1771 1139 1428z" fill="url(#wallSide)" />
            <path d="M1132 1164 1210 1158 1475 1455 1382 1463z" fill="url(#wallTop)" />
            <path d="M1382 1463 1475 1455 1480 1764 1388 1771z" fill="url(#wallFront)" />
            <path d="M1139 1428 1132 1164 1210 1158 1475 1455" fill="none" stroke="#30d878" stroke-width="1.5" />

            <path d="M1826 1295 2211 1269 2263 1307 2001 1325 1988 1315 1826 1328z" fill="url(#annexRoof)" />
            <path d="M1826 1295 2211 1269" stroke="#30e090" stroke-width="2" />
            <path d="M1780 1329 1988 1315 2001 1325 2263 1307 2261 1482 1999 1503 1990 1493 1780 1508z" fill="#12f6ff" />
            <path d="M2001 1325 2263 1307 2261 1482 1999 1503z" fill="#18f8ff" />
            <path d="M1524 1260 1825 1239V1505L1786 1508V1519L1527 1539z" fill="url(#blockFront)" />
            <path d="M1414 1152 1524 1260 1527 1539 1491 1497 1487 1317 1415 1245z" fill="url(#blockSide)" />
            <path d="M1487 1317 1500 1400 1506 1514 1491 1497z" fill="url(#blockEdge)" />
            <path d="M1414 1152 1697 1134 1825 1239 1524 1260z" fill="url(#roof)" />
            <g clip-path="url(#roofClip)">
              <ellipse cx="1635" cy="1214" rx="90" ry="28" fill="#00dcb0" filter="url(#soft)" />
              <path d="M1690 1124 1850 1240 1800 1228 1700 1160z" fill="#5a70ee" filter="url(#soft)" />
              <path d="M1560 1140 1700 1132 1730 1150 1690 1156 1600 1154z" fill="#3c58e8" filter="url(#soft)" />
              <path d="M1570 1143 1697 1134 1672 1143 1610 1151z" fill="#0808d4" filter="url(#faint)" />
            </g>
            <path d="M1415 1245V1152L1697 1134" fill="none" stroke="#28d870" stroke-width="1.5" />

            <g v-for="p in probes" :key="p.value" :transform="`translate(${p.x} ${p.y})`">
              <path d="M0 0 8 -15V-38H67V-12H19z" fill="#fff" stroke="#ff2cff" stroke-width="2" stroke-linejoin="round" />
              <circle r="5" fill="#8c0078" />
              <text x="13" y="-17" class="probe">{{ p.value }}</text>
            </g>

            <g class="axes">
              <path d="M515 1637 513 1594" stroke="#1010f0" stroke-width="3" /><path d="M513 1575 520 1596H506z" fill="#0a0ac8" />
              <path d="M516 1637 560 1632" stroke="#10f010" stroke-width="4" /><path d="M579 1631 559 1626V1640z" fill="#0cb80c" />
              <path d="M516 1638 519 1648" stroke="#f01010" stroke-width="4" /><circle cx="520" cy="1649" r="6" fill="#900808" />
              <text x="504" y="1569" fill="#2020ff">Z</text><text x="586" y="1637" fill="#20e820">Y</text><text x="516" y="1665" fill="#ff3030">X</text>
            </g>
          </svg>
          <div class="notes">
            <p>Dimensions de la soufflerie: Dx = 350.069 m, Dy = 287.804 m, Dz = 125.902 m</p>
            <p>Vitesse de l'écoulement libre: 30 m/s</p>
          </div>
          <div class="notes bottom">
            <p>Informations sur le maillage: 279 082 cellules, 312 767 nœuds</p>
            <p>Somme des forces de traînée du modèle original: Fx = 642.131 kN, Fy = -72.652 kN, Fz = 333.147 kN</p>
            <p>Somme des forces de traînée du modèle simplifié: Fx = 627.108 kN, Fy = -71.419 kN, Fz = 334.066 kN</p>
          </div>

          <div class="dialog" role="dialog" aria-label="Résultats du flux transitoire">
            <div class="dialog-title">
              <svg class="ic" viewBox="0 0 16 16" v-html="icons.app" />
              <h2>Résultats du flux transitoire</h2>
              <button class="dialog-x" aria-label="Fermer la fenêtre"><svg viewBox="0 0 20 20"><path d="M2 2l16 16M18 2 2 18" /></svg></button>
            </div>
            <div class="dialog-body">
              <div class="group chart-group">
                <h3>Graphique</h3>
                <div class="quantity">
                  <label for="quantity">Grandeur :</label>
                  <span class="combo">
                    <select id="quantity"><option>Pression</option></select>
                    <svg viewBox="0 0 16 10"><path d="M1 1l7 7 7-7" /></svg>
                  </span>
                </div>
                <svg class="chart" viewBox="474 380 688 638">
                  <path d="M576 400H1126V936" fill="none" stroke="#c8c8c8" stroke-width="1.5" />
                  <g stroke="#cfcfcf" stroke-width="2" stroke-dasharray="5 3">
                    <path v-for="t in yTicks" :key="t.value" :d="`M576 ${t.y}H1126`" />
                    <path v-for="t in xTicks" :key="t.value" :d="`M${t.x} 400V936`" />
                  </g>
                  <svg x="576" y="400" width="550" height="536" viewBox="302 366 1135 977" preserveAspectRatio="none">
                    <polyline :points="curve" fill="none" stroke="#63639a" stroke-width="3" stroke-linejoin="round" vector-effect="non-scaling-stroke" />
                  </svg>
                  <path d="M576 400V936H1127" fill="none" stroke="#111" stroke-width="2" />
                  <path :d="minor" stroke="#111" stroke-width="2" />
                  <g v-for="t in yTicks" :key="t.value">
                    <path :d="`M567 ${t.y}h9`" stroke="#111" stroke-width="2" />
                    <text :x="561" :y="t.y + 6" text-anchor="end">{{ t.value }}</text>
                  </g>
                  <g v-for="t in xTicks" :key="t.value">
                    <path :d="`M${t.x} 936v9`" stroke="#111" stroke-width="2" />
                    <text :x="t.x - 1" y="966" text-anchor="middle">{{ t.value }}</text>
                  </g>
                  <text class="axis-name" x="852" y="997" text-anchor="middle">Temps [s]</text>
                  <text class="axis-name" transform="translate(512 669) rotate(-90)" text-anchor="middle">Pression [Pa]</text>
                </svg>
              </div>

              <div class="group type-group">
                <h3>Type de graphique</h3>
                <span class="combo">
                  <select aria-label="Type de graphique"><option>Relevés ponctuels - Modèle simplifié</option></select>
                  <svg viewBox="0 0 16 10"><path d="M1 1l7 7 7-7" /></svg>
                </span>
                <div class="listbox">
                  <ul role="listbox" aria-label="Relevés">
                    <li v-for="s in series" :key="s" role="option" :class="{ chosen: s === selectedSeries }" @click="selectedSeries = s">{{ s }}</li>
                  </ul>
                  <div class="vscroll">
                    <svg viewBox="0 0 16 10"><path d="M2 8l6-5 6 5" /></svg>
                    <span class="thumb" />
                    <span class="fill" />
                    <svg viewBox="0 0 16 10"><path d="M2 2l6 5 6-5" /></svg>
                  </div>
                </div>
                <div class="pair">
                  <button class="btn">Afficher tout</button>
                  <button class="btn">Masquer tout</button>
                </div>
              </div>

              <div class="actions">
                <button class="btn primary">Fermer</button>
                <button class="btn">Aide</button>
                <span class="fill" />
                <p>Graphique :</p>
                <label class="check"><input v-model="legend" type="checkbox" />Légende</label>
                <button class="btn">Suivant</button>
                <button class="btn" disabled>Précédent</button>
                <button class="btn">Exp. les données</button>
                <button class="btn" disabled>Tout exporter</button>
                <button class="btn">Imprimer</button>
                <button class="btn">Copier</button>
                <p class="last">Paramètres :</p>
                <button class="btn">Modifier</button>
              </div>
            </div>
          </div>
        </div>
        <div class="tabs">
          <button class="tab"><svg class="ic" viewBox="0 0 16 16" v-html="icons.towerBlue" />Modèles</button>
          <button class="tab"><svg class="ic" viewBox="0 0 16 16" v-html="icons.towerMix" />Zones</button>
          <button class="tab"><svg class="ic" viewBox="0 0 16 16" v-html="icons.meshCells" />Raffinements de maillage</button>
          <button class="tab active"><svg class="ic" viewBox="0 0 16 16" v-html="icons.params" />Simulation</button>
          <span class="tab-fill" />
        </div>
      </section>

      <aside class="dock right">
        <div class="dock-head pale">
          <h2>Barre des tâches - Simulation</h2>
          <button class="cap" aria-label="Épingler"><svg viewBox="0 0 16 16"><path d="M5 2v8M11 2v8M9 2v8M5 2h6M2 10h12M8 10v5" /></svg></button>
          <button class="cap" aria-label="Fermer le volet"><svg viewBox="0 0 16 16"><path d="M3 3l10 10M13 3 3 13" /></svg></button>
        </div>
        <div class="panels">
          <section class="panel">
            <h3>Éditeur</h3>
            <a v-for="e in editor" :key="e.text" href="#" class="task" :class="{ current: e.current }">
              <svg class="ic" viewBox="0 0 16 16" v-html="icons[e.icon]" /><span>{{ e.text }}</span>
            </a>
          </section>
          <section class="panel">
            <h3>Simulation</h3>
            <a v-for="e in simulation" :key="e.text" href="#" class="task">
              <svg class="ic" viewBox="0 0 16 16" v-html="icons[e.icon]" /><span>{{ e.text }}</span>
            </a>
          </section>
          <section class="panel">
            <h3>Résultats - Grandeurs de la surface</h3>
            <div class="keys">
              <button class="key warm on">p</button>
              <button class="key warm"><span>c<sub>p</sub></span></button>
            </div>
          </section>
          <section class="panel">
            <h3>Résultats - Grandeurs du champ ...</h3>
            <div class="keys">
              <button class="key cold">p</button>
              <button class="key cold">v</button>
            </div>
          </section>
          <section class="panel">
            <h3>Résultats - Autres options</h3>
            <div class="keys">
              <button v-for="o in others" :key="o" class="key" :aria-label="o"><svg class="ic" viewBox="0 0 16 16" v-html="icons[o]" /></button>
              <svg class="pointer" viewBox="0 0 110 90">
                <path d="M99 10 33 53" stroke="#0808ff" stroke-width="9" stroke-linecap="round" />
                <path d="M6 79 18 52 24 55 40 73 34 77z" fill="#0808ff" />
              </svg>
            </div>
          </section>
          <section class="panel">
            <h3>Pression surfacique</h3>
            <div class="legend">
              <p class="unit">Pression [Pa]</p>
              <div class="scale">
                <div class="swatches"><i v-for="c in scaleColors" :key="c" :style="{ background: c }" /></div>
                <div class="values">
                  <span>653.9</span>
                  <div class="steps"><span v-for="v in scaleValues" :key="v">{{ v }}</span></div>
                </div>
              </div>
              <dl>
                <dt>Max:</dt><dd>653.9</dd>
                <dt>Min:</dt><dd>-693.4</dd>
              </dl>
            </div>
          </section>
          <section class="panel gray">
            <h3>Couche temporelle</h3>
            <div class="layer">
              <div class="line">
                <span class="combo">
                  <select aria-label="Couche temporelle"><option>T041 - 120.00 [s], Principal</option></select>
                  <svg viewBox="0 0 16 10"><path d="M1 1l7 7 7-7" /></svg>
                </span>
                <button class="mini" aria-label="Réglages"><svg class="ic" viewBox="0 0 16 16" v-html="icons.gear" /></button>
              </div>
              <div class="hscroll">
                <svg viewBox="0 0 10 12"><path d="M8 1 2 6l6 5" /></svg>
                <span class="fill" />
                <span class="thumb" />
                <svg viewBox="0 0 10 12"><path d="M2 1l6 5-6 5" /></svg>
              </div>
              <label class="check"><input v-model="animation" type="checkbox" />Animation des flux</label>
            </div>
          </section>
          <section class="panel">
            <h3>Options d'affichage</h3>
            <a href="#" class="task"><svg class="ic" viewBox="0 0 16 16" v-html="icons.history" /><span>Afficher l'historique</span></a>
            <label v-for="d in display" :key="d.text" class="task"><input v-model="d.on" type="checkbox" /><span>{{ d.text }}</span></label>
          </section>
          <section class="panel gray">
            <h3>Relevé ponctuel actuel</h3>
            <div class="current-probe">
              <span class="combo">
                <select aria-label="Relevé ponctuel actuel"><option>0 - Temporaire, Modèle d'origine</option></select>
                <svg viewBox="0 0 16 10"><path d="M1 1l7 7 7-7" /></svg>
              </span>
              <div class="line">
                <button v-for="t in probeTools" :key="t" class="mini" :aria-label="t"><svg class="ic" viewBox="0 0 16 16" v-html="icons[t]" /></button>
              </div>
            </div>
          </section>
        </div>
        <div class="tabs">
          <button class="tab active"><svg class="ic" viewBox="0 0 16 16" v-html="icons.tools" />Barre des tâches</button>
          <button class="tab"><svg class="ic" viewBox="0 0 16 16" v-html="icons.cutCube" />Découpe</button>
          <span class="tab-fill" />
        </div>
      </aside>
    </main>

    <footer class="status">
      <span>Appuyer sur F1 pour ouvrir l'Aide</span>
      <i /><i /><i class="wide" /><i class="wide" /><i class="wide" />
    </footer>
  </div>
</template>

<style>
body { background: #f0f0f0; }
</style>

<style scoped>
* { box-sizing: border-box; margin: 0; padding: 0; }
.window {
  min-height: 100vh; display: flex; flex-direction: column; overflow: hidden;
  border: 2px solid #0078d7; border-top: 0; background: #f0f0f0; color: #111;
  font: 19px/28px "DejaVu Sans Condensed", "DejaVu Sans", sans-serif; font-stretch: condensed;
}
button, select, input { font: inherit; color: inherit; }
button { border: 0; background: none; }
ul { list-style: none; }
h1, h2, h3 { font-weight: normal; font-size: inherit; }
a { color: inherit; text-decoration: none; }
.ic { width: 28px; height: 28px; flex: none; display: block; overflow: visible; }
.fill { flex: 1; }

.titlebar { height: 54px; display: flex; align-items: center; background: #0078d7; color: #fff; padding: 0 3px 0 14px; font: 20px/28px "Open Sans", sans-serif; }
.titlebar h1 { flex: 1; margin-left: 8px; }
.win-btn { width: 79px; height: 54px; display: grid; place-items: center; }
.win-btn svg, .dialog-x svg { width: 20px; height: 20px; fill: none; stroke: #fff; stroke-width: 2; }

.menubar { height: 46px; display: flex; align-items: center; padding: 0 6px 2px 10px; background: linear-gradient(90deg, #e9ebf9, #f4f5fc); border-top: 2px solid #fff; font: 20px/28px "Open Sans", sans-serif; }
.menubar .ic { margin: 0 0 0 5px; }
.menubar button { padding: 0 15px; height: 40px; white-space: nowrap; }
.grip { width: 3px; height: 26px; background: repeating-linear-gradient(#8d93a8 0 3px, transparent 3px 7px); }
.mdi { width: 76px; height: 20px; fill: none; stroke: #222; stroke-width: 2; }

.toolbar-row { height: 44px; display: flex; background: linear-gradient(90deg, #e9ebf9, #f4f5fc); padding-left: 4px; }
.toolbar { display: flex; align-items: center; height: 43px; padding: 0 6px 2px 6px; border-radius: 6px 0 0 6px; background: linear-gradient(#fbfbff, #e2e5ef 50%, #c3c8d9); }
.toolbar .grip { margin-right: 4px; }
.tool { width: 38px; height: 38px; display: grid; place-items: center; }
.tool .ic { width: 27px; height: 27px; }
.tool.on { border: 2px solid #5d9ec4; background: linear-gradient(#d3ebf8, #9fd0ea); }
.tool.on.off { border-color: #9fabb5; background: linear-gradient(#c6e2f0, #a4cfe4); }
.sep { width: 2px; height: 24px; margin: 0 6px 0 5px; background: #b4b9ca; }
.drop { width: 11px; height: 6px; background: #222; clip-path: polygon(10% 0, 90% 0, 50% 100%); }
.drop.off { background: #a2a6b2; }
.overflow { width: 20px; height: 43px; border-radius: 0 6px 6px 0; background: linear-gradient(#d3d7e4, #b4bacd); display: grid; place-items: end center; padding-bottom: 8px; }
.overflow::after { content: ""; width: 12px; height: 10px; background: #111; clip-path: polygon(0 0, 100% 0, 100% 20%, 0 20%, 0 40%, 100% 40%, 50% 100%, 0 40%); }

.workspace { flex: 1; display: grid; grid-template-columns: 393px minmax(0, 1fr) 350px; padding-top: 3px; }
.dock { display: flex; flex-direction: column; min-width: 0; }
.dock-head { height: 30px; display: flex; align-items: center; gap: 2px; padding: 0 4px 0 5px; background: #99b4d1; color: #1c2430; }
.dock-head.pale { background: #bfcddb; }
.dock-head h2 { flex: 1; white-space: nowrap; }
.cap { width: 22px; height: 22px; display: grid; place-items: center; background: #f3f3f3; border: 2px solid #fff; border-right-color: #777; border-bottom-color: #777; }
.cap svg { width: 16px; height: 16px; fill: none; stroke: #111; stroke-width: 2; }

.tree { flex: 1; margin-top: 4px; background: #fff; }
.tree li { height: 28px; display: flex; align-items: center; }
.guide { width: 33px; height: 28px; flex: none; overflow: visible; }
.dot { stroke: #a0a0a0; stroke-width: 2; stroke-dasharray: 2 2; fill: none; }
.tree .ic { margin-left: 7px; position: relative; width: 27px; height: 27px; }
.label { margin-left: 5px; padding: 0 4px; white-space: nowrap; line-height: 28px; }
.bold { font-weight: bold; }
.root { font-size: 20px; }
.selected { background: #0078d7; color: #fff; outline: 2px dotted #12283c; outline-offset: -2px; }

.tabs { display: flex; align-items: flex-start; height: 41px; font: 20px/28px "Open Sans", sans-serif; }
.tab { height: 37px; display: flex; align-items: center; gap: 6px; padding: 0 5px; border: solid #7a7a7a; border-width: 3px 3px 3px 0; border-bottom-right-radius: 6px; white-space: nowrap; background: #f0f0f0; margin-right: 2px; }
.tab.active { height: 40px; border-top-color: #f0f0f0; padding-right: 12px; }
.tab.tight { gap: 4px; padding: 0 5px; }
.tab-fill { flex: 1; border-top: 3px solid #7a7a7a; }
.left .tab-fill { border-color: transparent; }
.left .tabs { padding-left: 7px; }
.left .tab.active { gap: 4px; padding: 0 8px 0 4px; }
.center .tabs { padding-left: 3px; }
.center .tab.active { gap: 4px; padding-left: 3px; }
.right .tab.active { padding-right: 4px; }

.center { display: flex; flex-direction: column; margin: 0 7px 0 10px; min-width: 0; }
.view { position: relative; flex: 1; border: 3px solid #7a7a7a; background: #fff; overflow: hidden; }
.center .tabs { margin-top: -3px; height: 44px; }
.center .tab { position: relative; }
.center .tab-fill { border-color: transparent; }
.scene { position: absolute; inset: 0; width: 100%; height: 100%; }
.probe { font: bold 17px "Liberation Sans", Arial, sans-serif; fill: #f010e8; }
.axes text { font: 18px "Liberation Sans", Arial, sans-serif; }
.notes { position: absolute; left: 4px; top: 9px; color: #15157c; font: 19px/24px "Liberation Sans", Arial, sans-serif; }
.notes p { padding: 0 3px; white-space: pre; }
.notes.bottom { top: auto; bottom: 2px; }
.notes.bottom p { background: #dee2e3; width: max-content; }

.dialog { position: absolute; left: 34px; top: 68px; width: 1286px; height: 830px; display: flex; flex-direction: column; border: 2px solid #1c86dc; background: #f0f0f0; }
.dialog-title { flex: none; height: 52px; display: flex; align-items: center; gap: 9px; padding: 0 14px; background: #0078d7; color: #fff; font: 20px/28px "Open Sans", sans-serif; }
.dialog-title h2 { flex: 1; }
.dialog-x { width: 26px; height: 26px; display: grid; place-items: center; }
.dialog-body { flex: 1; min-height: 0; display: flex; padding: 14px 18px 14px 14px; }
.group { border: 2px solid #c0c7dc; background: #fff; display: flex; flex-direction: column; }
.group h3 { flex: none; height: 26px; line-height: 25px; padding-left: 5px; color: #4c5260; background: linear-gradient(#f6f7fb, #ccd2e2); border-bottom: 1px solid #c0c7dc; }
.chart-group { width: 720px; }
.quantity { display: flex; align-items: center; justify-content: space-between; padding: 18px 14px 12px 12px; }
.quantity .combo { width: 499px; }
.chart { margin: 0 14px; border: 2px solid #808080; background: #fff; display: block; }
.chart text { font-size: 18px; fill: #222; }
.chart .axis-name { font-size: 19px; fill: #34508f; }

.combo { position: relative; display: block; flex: none; height: 36px; }
.combo select { width: 100%; height: 100%; appearance: none; border: 2px solid #adadad; border-radius: 0; background: #e1e1e1; padding: 0 29px 0 4px; overflow: hidden; }
.combo svg { position: absolute; right: 8px; top: 13px; width: 16px; height: 10px; fill: none; stroke: #444; stroke-width: 2; pointer-events: none; }

.type-group { width: 325px; margin-left: 16px; padding-bottom: 14px; }
.type-group .combo { margin: 18px 11px 12px 10px; }
.listbox { flex: 1; margin: 0 11px 0 10px; display: flex; border: 2px solid #828790; overflow: hidden; padding: 3px 3px 0 2px; min-height: 0; }
.listbox ul { flex: 1; height: 592px; display: flex; flex-direction: column; }
.listbox li { flex: 1; line-height: 23px; padding-left: 1px; white-space: nowrap; min-height: 0; }
.chosen { background: #0078d7; color: #fff; }
.vscroll { width: 27px; margin: 0 0 3px 2px; background: #f0f0f0; display: flex; flex-direction: column; align-items: center; padding: 8px 0; }
.vscroll svg { width: 16px; height: 10px; fill: none; stroke: #444; stroke-width: 3; }
.vscroll .thumb { width: 27px; height: 372px; margin-top: 9px; background: #cdcdcd; }
.pair { display: flex; gap: 8px; margin: 12px 12px 0; }
.pair .btn { flex: 1; }

.btn { flex: none; height: 37px; border: 2px solid #adadad; background: #e1e1e1; text-align: center; white-space: nowrap; }
.btn.primary { border: 3px solid #0078d7; }
.btn:disabled { color: #8a8a8a; background: #cccccc; border-color: #bfbfbf; }
.actions { width: 173px; margin-left: auto; border-left: 2px solid #a8a8a8; padding: 0 0 1px 16px; display: flex; flex-direction: column; gap: 9px; }
.actions p { height: 22px; line-height: 22px; margin-left: -2px; }
.actions .last { margin-top: 6px; }
.check { display: flex; align-items: center; gap: 4px; height: 24px; }
.check input { appearance: none; width: 23px; height: 23px; border: 2px solid #333; background: #fff; }
.actions .check { margin-left: -2px; }

.right .panels { flex: 1; margin: 8px 4px 0 3px; display: flex; flex-direction: column; gap: 5px; }
.panel { border: 2px solid #cdd3e6; background: #fafafd; }
.panel h3 { height: 31px; line-height: 29px; display: flex; align-items: center; justify-content: space-between; padding: 0 7px 0 6px; color: #565c6c; white-space: nowrap; background: linear-gradient(#f2f3f9, #cbd0e1); }
.panel h3::after { content: ""; width: 13px; height: 7px; background: #6f7177; clip-path: polygon(0 0, 100% 0, 50% 100%); }
.panel.gray { background: #f0f0f0; }
.task { height: 33px; display: flex; align-items: center; gap: 8px; padding-left: 5px; white-space: nowrap; }
.task .ic { width: 28px; height: 26px; }
.task.current { font-weight: bold; }
.task.current::after { content: ""; width: 8px; height: 13px; margin: 0 8px 4px auto; background: #14148c; clip-path: polygon(100% 0, 0 50%, 100% 100%); }
.task input { appearance: none; width: 24px; height: 24px; margin: 0 2px; border: 2px solid #5a78c8; background: linear-gradient(135deg, #e4e2da, #fff); display: grid; place-items: center; }
.task input:checked::after { content: ""; width: 14px; height: 12px; background: #0c8a14; clip-path: polygon(0 50%, 20% 35%, 38% 60%, 85% 0, 100% 15%, 40% 100%); }
.keys { position: relative; display: flex; gap: 8px; height: 51px; padding: 7px 6px; }
.key { width: 38px; height: 38px; display: flex; flex-direction: column; align-items: center; justify-content: center; border: 2px solid #ccd2e4; background: #f0f1f6; font-size: 22px; line-height: 22px; }
.key.warm::after, .key.cold::after { content: ""; width: 28px; height: 5px; background: linear-gradient(90deg, #f5a070, #f0601c); }
.key.cold::after { background: linear-gradient(90deg, #a8d4f0, #68b0e0); }
.key.on { border: 3px solid #0078d7; }
.key sub { font-size: 13px; line-height: 10px; }
.pointer { position: absolute; right: 1px; top: -57px; width: 110px; height: 90px; filter: drop-shadow(4px 5px 3px rgba(0, 0, 0, .45)); }

.legend { height: 400px; padding: 8px 98px 0 97px; }
.unit { height: 28px; line-height: 28px; }
.scale { display: flex; justify-content: space-between; margin-top: 8px; height: 294px; }
.swatches { width: 70px; height: 267px; margin-top: 12px; display: flex; flex-direction: column; justify-content: space-between; }
.swatches i { height: 20px; border: 1px solid #cdd3e6; }
.values { text-align: right; line-height: 20px; display: flex; flex-direction: column; }
.values > span { height: 22px; }
.steps { display: flex; flex-direction: column; justify-content: space-between; height: 265px; }
.legend dl { display: grid; grid-template-columns: 70px 1fr; line-height: 23px; text-align: right; margin-top: 6px; }

.layer { height: 134px; padding: 12px 9px 0 8px; display: flex; flex-direction: column; gap: 6px; }
.line { display: flex; gap: 5px; }
.layer .combo { flex: 1; }
.mini { width: 38px; height: 34px; display: grid; place-items: center; border: 2px solid #b4b4b4; background: #ebebeb; }
.mini .ic { width: 26px; height: 26px; }
.hscroll { height: 33px; display: flex; align-items: center; padding: 0 14px; border: solid #9a9a9a; border-width: 2px 0 0 2px; }
.hscroll svg { width: 10px; height: 14px; fill: none; stroke: #333; stroke-width: 3; }
.hscroll .thumb { width: 30px; height: 23px; background: #cdcdcd; margin-right: 10px; }
.layer .check { margin-top: 9px; }
.current-probe { height: 96px; padding: 12px 11px 0 10px; }
.current-probe .line { margin: 4px 0 0 1px; }

.status { height: 38px; display: flex; align-items: center; padding: 0 12px 0 5px; border-top: 2px solid #dcdcdc; font: 20px/28px "Open Sans", sans-serif; }
.status span { flex: 1; }
.status i { width: 93px; height: 30px; border-left: 2px solid #d4d4d4; }
.status .wide { width: 139px; }
</style>
